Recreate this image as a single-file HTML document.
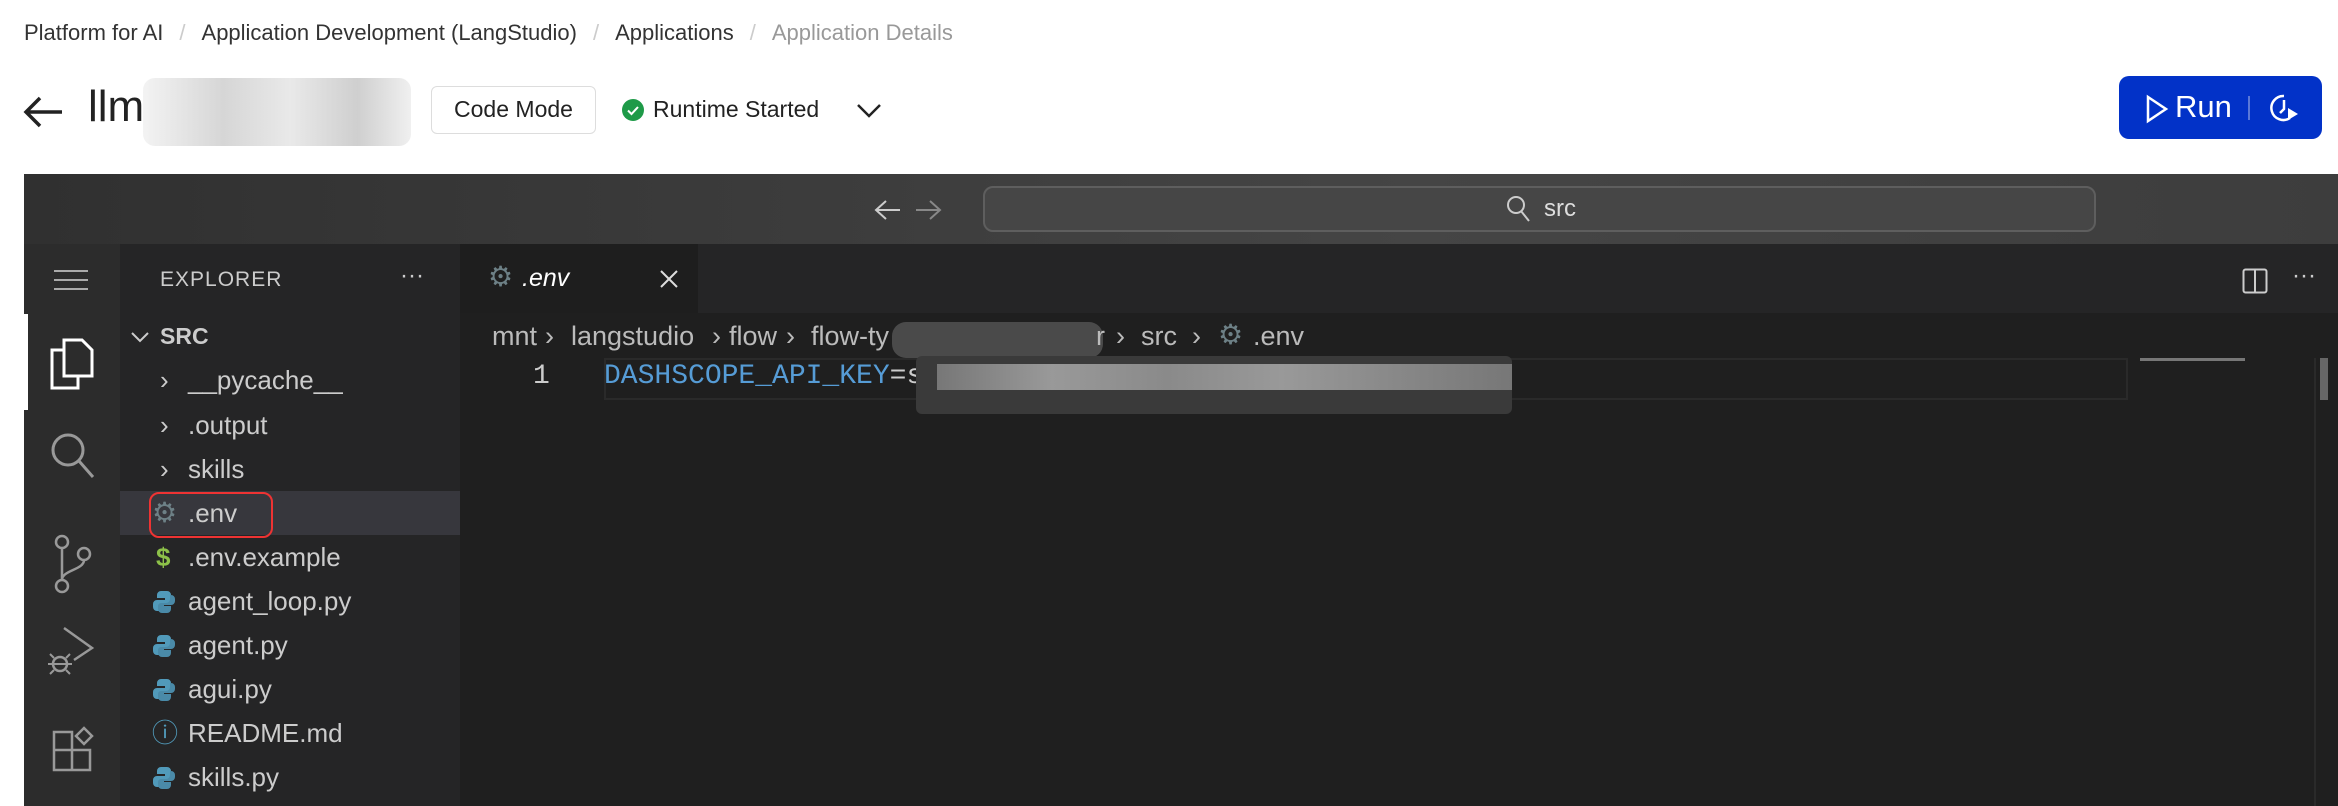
<!DOCTYPE html>
<html><head><meta charset="utf-8"><style>
*{margin:0;padding:0;box-sizing:border-box}
body{width:2338px;height:806px;background:#fff;position:relative;overflow:hidden;font-family:"Liberation Sans",sans-serif}
.a{position:absolute}
.bc{top:20px;left:24px;font-size:22px;color:#333;white-space:nowrap}
.bc span.s{color:#ccc;margin:0 16px}
.mono{font-family:"Liberation Mono",monospace}
.row{position:absolute;left:120px;width:340px;height:44px;font-size:26px;color:#ccc;line-height:44px}
.row .t{position:absolute;left:68px}
.row .ic{position:absolute;left:36px;top:0}
.py{position:absolute;left:33px;top:11px}
.b{position:absolute;top:321px;font-size:27px;color:#bbb;white-space:nowrap}
</style></head><body>
<div class="a bc">Platform for AI<span class="s">/</span>Application Development (LangStudio)<span class="s">/</span>Applications<span class="s">/</span><span style="color:#999">Application Details</span></div>
<svg class="a" style="left:22px;top:94px" width="44" height="36" viewBox="0 0 44 36"><path d="M40 18H4M18 4L4 18l14 14" fill="none" stroke="#222" stroke-width="3.5"/></svg>
<div class="a" style="left:88px;top:82px;font-size:44px;color:#222">llm</div>
<div class="a" style="left:143px;top:78px;width:268px;height:68px;border-radius:12px;background:linear-gradient(90deg,#f3f3f3,#d6d6d6 30%,#e9e9e9 55%,#cfcfcf 80%,#f0f0f0)"></div>
<div class="a" style="left:431px;top:86px;width:165px;height:48px;border:1.5px solid #ddd;border-radius:6px;font-size:23px;color:#222;text-align:center;line-height:45px">Code Mode</div>
<svg class="a" style="left:621px;top:98px" width="24" height="24"><circle cx="12" cy="12" r="11" fill="#1e9a48"/><path d="M7 12.5l3.5 3.5 6.5-7" fill="none" stroke="#fff" stroke-width="2"/></svg>
<div class="a" style="left:653px;top:96px;font-size:23px;color:#222">Runtime Started</div>
<svg class="a" style="left:856px;top:102px" width="26" height="16"><path d="M2 3l11 11 11-11" fill="none" stroke="#222" stroke-width="2.5"/></svg>
<div class="a" style="left:2119px;top:76px;width:203px;height:63px;background:#0232c8;border-radius:10px"></div>
<svg class="a" style="left:2145px;top:94px" width="24" height="30"><path d="M3 3l18 12L3 27z" fill="none" stroke="#fff" stroke-width="2.5"/></svg>
<div class="a" style="left:2175px;top:89px;font-size:31px;color:#fff">Run</div>
<div class="a" style="left:2248px;top:96px;width:2px;height:24px;background:#5a78d8"></div>
<svg class="a" style="left:2268px;top:92px" width="34" height="32"><path d="M16 4a12 12 0 1 0 6 22" fill="none" stroke="#fff" stroke-width="2.5"/><path d="M16 8v9l-4 4" fill="none" stroke="#fff" stroke-width="2.5"/><path d="M20 16l10 6-10 6z" fill="#fff"/></svg>

<!-- IDE -->
<div class="a" style="left:24px;top:174px;width:2314px;height:70px;background:linear-gradient(90deg,#303030,#454545 60%,#3d3d3d)"></div>
<svg class="a" style="left:874px;top:198px" width="70" height="24"><path d="M2 12h24M12 3L2 12l10 9" fill="none" stroke="#ccc" stroke-width="2"/><path d="M66 12H42M56 3l10 9-10 9" fill="none" stroke="#888" stroke-width="2"/></svg>
<div class="a" style="left:983px;top:186px;width:1113px;height:46px;border:2px solid #5e5e5e;border-radius:10px;background:#464646"></div>
<svg class="a" style="left:1506px;top:194px" width="26" height="30"><circle cx="10" cy="11" r="8" fill="none" stroke="#ccc" stroke-width="2"/><path d="M15 17l8 10" stroke="#ccc" stroke-width="2"/></svg>
<div class="a" style="left:1544px;top:195px;font-size:24px;color:#ddd">src</div>

<div class="a" style="left:24px;top:244px;width:96px;height:562px;background:#2c2c2c"></div>
<div class="a" style="left:24px;top:314px;width:4px;height:96px;background:#fff"></div>
<div class="a" style="left:120px;top:244px;width:340px;height:562px;background:#252526"></div>
<div class="a" style="left:460px;top:244px;width:1878px;height:69px;background:#252526"></div>
<div class="a" style="left:460px;top:244px;width:238px;height:69px;background:#1e1e1e"></div>
<div class="a" style="left:460px;top:313px;width:1878px;height:493px;background:#1f1f1f"></div>

<!-- activity icons -->
<svg class="a" style="left:52px;top:268px" width="40" height="24"><path d="M2 3h34M2 12h34M2 21h34" stroke="#aaa" stroke-width="2"/></svg>
<svg class="a" style="left:48px;top:338px" width="48" height="56"><path d="M16 2h18l10 10v26H16z" fill="none" stroke="#fff" stroke-width="3"/><path d="M16 12H4v38h26v-12" fill="none" stroke="#fff" stroke-width="3"/></svg>
<svg class="a" style="left:48px;top:430px" width="48" height="56"><circle cx="20" cy="20" r="15" fill="none" stroke="#999" stroke-width="3"/><path d="M31 31l14 16" stroke="#999" stroke-width="3"/></svg>
<svg class="a" style="left:52px;top:534px" width="40" height="60"><circle cx="10" cy="8" r="6" fill="none" stroke="#999" stroke-width="2.5"/><circle cx="10" cy="52" r="6" fill="none" stroke="#999" stroke-width="2.5"/><circle cx="32" cy="20" r="6" fill="none" stroke="#999" stroke-width="2.5"/><path d="M10 14v32M32 26c0 10-22 10-22 20" fill="none" stroke="#999" stroke-width="2.5"/></svg>
<svg class="a" style="left:46px;top:624px" width="52" height="56"><path d="M18 4l28 20-18 12" fill="none" stroke="#999" stroke-width="2.5"/><circle cx="14" cy="40" r="7" fill="none" stroke="#999" stroke-width="2.5"/><path d="M2 40h24M4 30l4 4M24 30l-4 4M4 50l4-4M24 50l-4-4" stroke="#999" stroke-width="2"/></svg>
<svg class="a" style="left:52px;top:724px" width="44" height="52"><path d="M2 8h18v18H2zM2 26h18v20H2zM20 26h18v20H20z" fill="none" stroke="#999" stroke-width="2.5"/><path d="M32 4l8 8-8 8-8-8z" fill="none" stroke="#999" stroke-width="2.5"/></svg>

<!-- explorer -->
<div class="a" style="left:160px;top:268px;font-size:21px;color:#ccc;letter-spacing:1px">EXPLORER</div>
<div class="a" style="left:400px;top:262px;font-size:24px;color:#ccc">···</div>
<svg class="a" style="left:130px;top:330px" width="20" height="14"><path d="M2 3l8 8 8-8" fill="none" stroke="#ccc" stroke-width="2"/></svg>
<div class="a" style="left:160px;top:323px;font-size:23px;color:#ccc;font-weight:bold">SRC</div>
<div class="a" style="left:120px;top:491px;width:340px;height:44px;background:#37373d"></div>
<div class="row" style="top:358px"><span class="ic" style="left:40px">›</span><span class="t" style="left:68px">__pycache__</span></div>
<div class="row" style="top:403px"><span class="ic" style="left:40px">›</span><span class="t">.output</span></div>
<div class="row" style="top:447px"><span class="ic" style="left:40px">›</span><span class="t">skills</span></div>
<div class="row" style="top:491px"><span class="ic" style="left:32px;color:#6d8086;font-size:28px">⚙</span><span class="t">.env</span></div>
<div class="a" style="left:149px;top:492px;width:124px;height:46px;border:2.5px solid #e33;border-radius:10px"></div>
<div class="row" style="top:535px"><span class="ic" style="left:36px;color:#8dc149;font-weight:bold">$</span><span class="t">.env.example</span></div>
<div class="row" style="top:579px"><svg class="py" width="22" height="24"><path d="M11 1h-3a4 4 0 0 0-4 4v3h8v2H4a4 4 0 0 0-4 4v3a4 4 0 0 0 4 4h2v-4a4 4 0 0 1 4-4h5a3 3 0 0 0 3-3V5a4 4 0 0 0-4-4z" fill="#519aba"/><path d="M11 23h3a4 4 0 0 0 4-4v-3h-7v-1h7a4 4 0 0 0 4-4v-2a4 4 0 0 0-4-4h-1v4a4 4 0 0 1-4 4H8a3 3 0 0 0-3 3v3a4 4 0 0 0 4 4z" fill="#4a8aa8"/></svg><span class="t">agent_loop.py</span></div>
<div class="row" style="top:623px"><svg class="py" width="22" height="24"><path d="M11 1h-3a4 4 0 0 0-4 4v3h8v2H4a4 4 0 0 0-4 4v3a4 4 0 0 0 4 4h2v-4a4 4 0 0 1 4-4h5a3 3 0 0 0 3-3V5a4 4 0 0 0-4-4z" fill="#519aba"/><path d="M11 23h3a4 4 0 0 0 4-4v-3h-7v-1h7a4 4 0 0 0 4-4v-2a4 4 0 0 0-4-4h-1v4a4 4 0 0 1-4 4H8a3 3 0 0 0-3 3v3a4 4 0 0 0 4 4z" fill="#4a8aa8"/></svg><span class="t">agent.py</span></div>
<div class="row" style="top:667px"><svg class="py" width="22" height="24"><path d="M11 1h-3a4 4 0 0 0-4 4v3h8v2H4a4 4 0 0 0-4 4v3a4 4 0 0 0 4 4h2v-4a4 4 0 0 1 4-4h5a3 3 0 0 0 3-3V5a4 4 0 0 0-4-4z" fill="#519aba"/><path d="M11 23h3a4 4 0 0 0 4-4v-3h-7v-1h7a4 4 0 0 0 4-4v-2a4 4 0 0 0-4-4h-1v4a4 4 0 0 1-4 4H8a3 3 0 0 0-3 3v3a4 4 0 0 0 4 4z" fill="#4a8aa8"/></svg><span class="t">agui.py</span></div>
<div class="row" style="top:711px"><span class="ic" style="left:32px;color:#519aba">ⓘ</span><span class="t">README.md</span></div>
<div class="row" style="top:755px"><svg class="py" width="22" height="24"><path d="M11 1h-3a4 4 0 0 0-4 4v3h8v2H4a4 4 0 0 0-4 4v3a4 4 0 0 0 4 4h2v-4a4 4 0 0 1 4-4h5a3 3 0 0 0 3-3V5a4 4 0 0 0-4-4z" fill="#519aba"/><path d="M11 23h3a4 4 0 0 0 4-4v-3h-7v-1h7a4 4 0 0 0 4-4v-2a4 4 0 0 0-4-4h-1v4a4 4 0 0 1-4 4H8a3 3 0 0 0-3 3v3a4 4 0 0 0 4 4z" fill="#4a8aa8"/></svg><span class="t">skills.py</span></div>

<!-- tab -->
<div class="a" style="left:488px;top:260px;font-size:28px;color:#6d8086">⚙</div>
<div class="a" style="left:522px;top:264px;font-size:25px;color:#fff;font-style:italic">.env</div>
<svg class="a" style="left:659px;top:269px" width="20" height="20"><path d="M2 2l16 16M18 2L2 18" stroke="#ddd" stroke-width="2"/></svg>
<svg class="a" style="left:2242px;top:268px" width="26" height="26"><rect x="1.5" y="1.5" width="23" height="23" rx="2" fill="none" stroke="#ccc" stroke-width="2"/><path d="M13 2v22" stroke="#ccc" stroke-width="2"/></svg>
<div class="a" style="left:2292px;top:262px;font-size:24px;color:#ccc">···</div>

<!-- breadcrumbs -->
<div class="b" style="left:492px">mnt</div><div class="b" style="left:545px">›</div>
<div class="b" style="left:571px">langstudio</div><div class="b" style="left:712px">›</div>
<div class="b" style="left:729px">flow</div><div class="b" style="left:786px">›</div>
<div class="b" style="left:811px">flow-ty</div>
<div class="a" style="left:892px;top:322px;width:211px;height:36px;border-radius:14px;background:#4a4a4a"></div>
<div class="b" style="left:1096px">r</div><div class="b" style="left:1116px">›</div>
<div class="b" style="left:1141px">src</div><div class="b" style="left:1192px">›</div>
<div class="b" style="left:1218px;color:#6d8086;top:318px;font-size:28px">⚙</div>
<div class="b" style="left:1253px">.env</div>

<div class="a" style="left:604px;top:358px;width:1524px;height:42px;border:2px solid #2a2a2a"></div>
<div class="a mono" style="left:533px;top:361px;font-size:28px;color:#ccc">1</div>
<div class="a mono" style="left:604px;top:361px;font-size:28px;color:#569cd6">DASHSCOPE_API_KEY<span style="color:#ccc">=s</span></div>
<div class="a" style="left:916px;top:356px;width:596px;height:58px;border-radius:6px;background:#3a3a3a"></div>
<div class="a" style="left:937px;top:364px;width:575px;height:26px;background:linear-gradient(90deg,#777,#999 20%,#8a8a8a 40%,#999 60%,#888 80%,#777)"></div>
<div class="a" style="left:2140px;top:358px;width:105px;height:3px;background:#777"></div>
<div class="a" style="left:2320px;top:358px;width:8px;height:42px;background:#666"></div>
<div class="a" style="left:2314px;top:358px;width:2px;height:448px;background:#2a2a2a"></div>
</body></html>
